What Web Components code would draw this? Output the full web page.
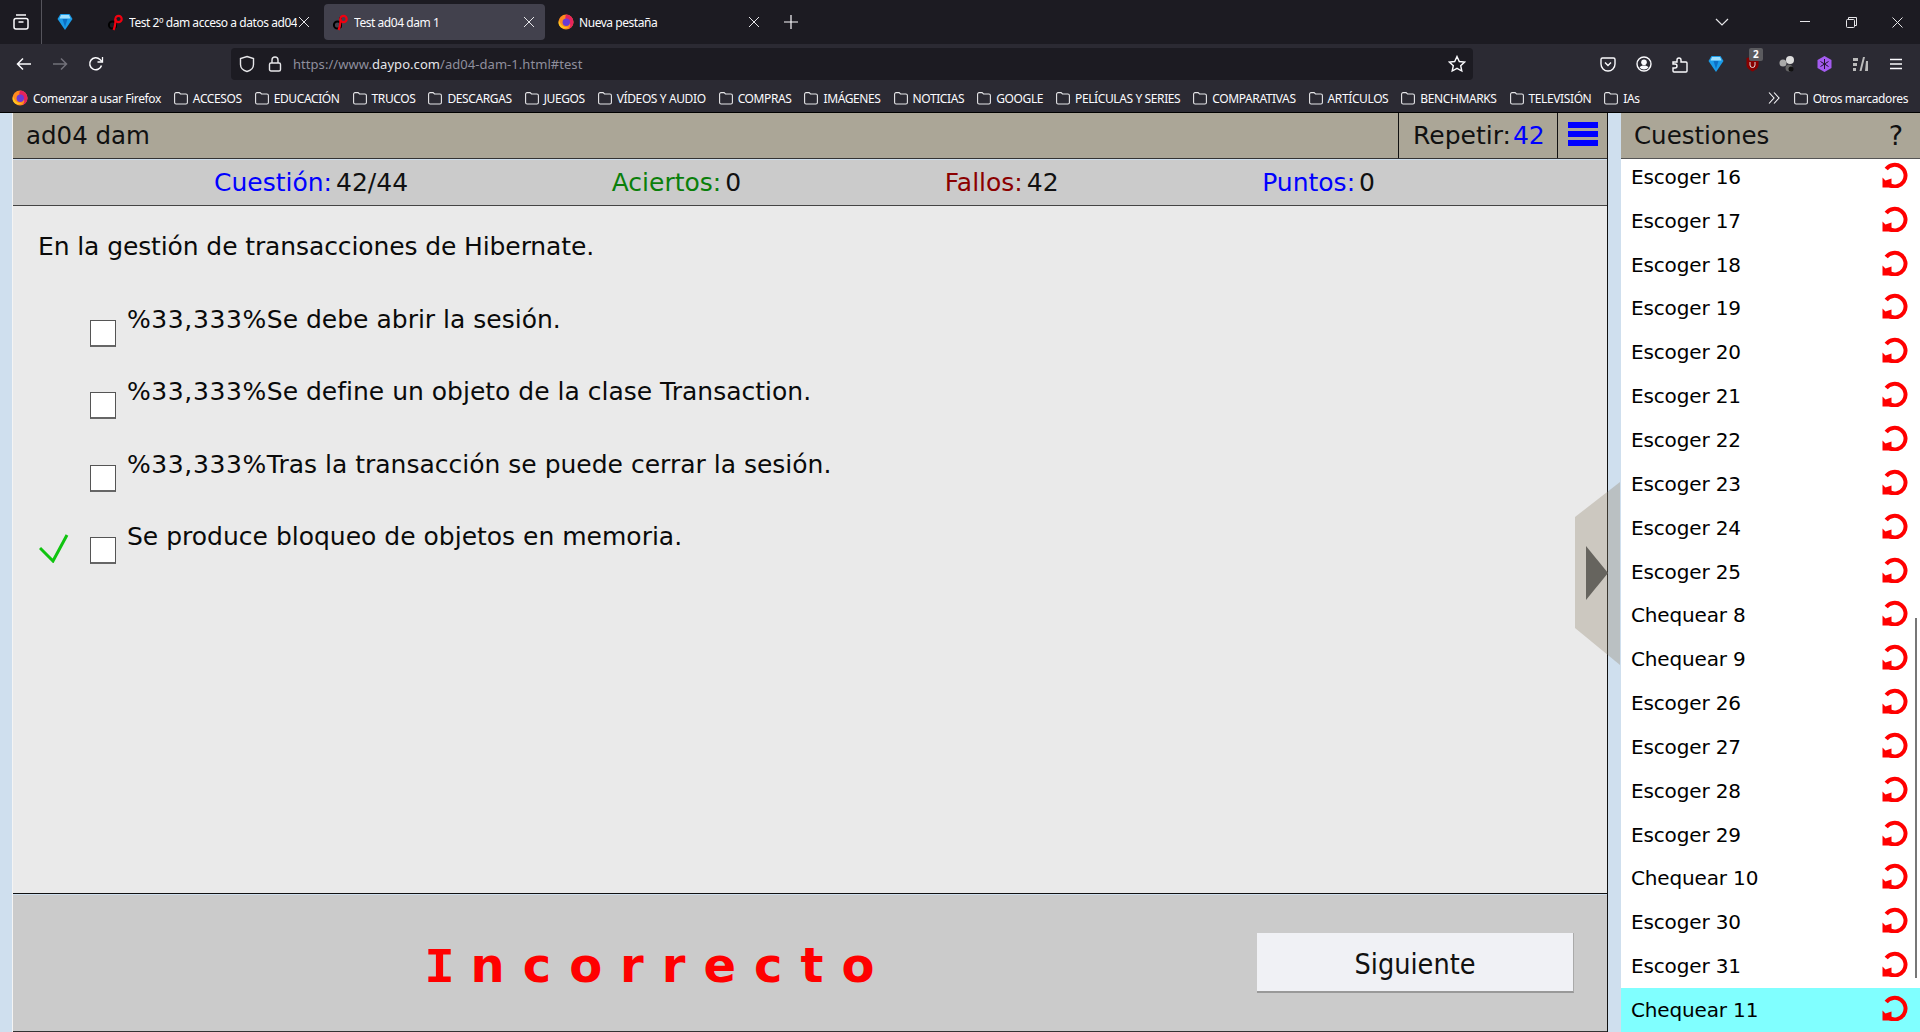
<!DOCTYPE html>
<html lang="es"><head><meta charset="utf-8"><title>Test ad04 dam 1</title>
<style>
html,body{margin:0;padding:0;height:1032px;overflow:hidden;background:#cfdfee}
body{display:flex;flex-direction:column;font-family:"DejaVu Sans",sans-serif}
</style></head><body>
<x-tabbar></x-tabbar>
<x-toolbar></x-toolbar>
<x-bookmarks></x-bookmarks>
<x-page>
  <x-title-bar slot="main" name="ad04 dam" repeat="42"></x-title-bar>
  <x-stats slot="main"></x-stats>
  <x-question slot="main" text="En la gestión de transacciones de Hibernate.">
    <x-option><span style="letter-spacing:.6px">%33,333%</span>Se debe abrir la sesión.</x-option>
    <x-option><span style="letter-spacing:.6px">%33,333%</span>Se define un objeto de la clase Transaction.</x-option>
    <x-option><span style="letter-spacing:.6px">%33,333%</span>Tras la transacción se puede cerrar la sesión.</x-option>
    <x-option checked>Se produce bloqueo de objetos en memoria.</x-option>
  </x-question>
  <x-status slot="main"></x-status>
  <x-sidebar slot="side"></x-sidebar>
</x-page>
<script>
const def=(n,html,setup)=>customElements.define(n,class extends HTMLElement{
  connectedCallback(){ if(this.shadowRoot) return; const s=this.attachShadow({mode:'open'}); s.innerHTML=typeof html==='function'?html(this):html; if(setup) setup(this,s); }
});
const UI='"Noto Sans",sans-serif';
const daypo=`<svg width="17" height="17" viewBox="0 0 17 17"><circle cx="5.500" cy="11" r="3.600" fill="none" stroke="#000" stroke-width="2"/><path d="M8.500 3v11" stroke="#000" stroke-width="2"/><circle cx="11.500" cy="5" r="3.200" fill="none" stroke="#f00110" stroke-width="2.200"/><path d="M8.500 5c0 5-.5 8-2 11" stroke="#f00110" stroke-width="2.200" fill="none"/></svg>`;
const diamond=`<svg width="16" height="18" viewBox="0 0 16 18"><path d="M3.500 1h9L15.500 6 8 17 .5 6z" fill="#1a9be8"/><path d="M4 2h8l1.500 3.500h-11z" fill="#9fe0ff"/><path d="M5.500 6h5L8 14z" fill="#0d6fc4"/></svg>`;
const fox=`<svg width="16" height="16" viewBox="0 0 16 16"><circle cx="8" cy="8" r="7.500" fill="#ff8a1f"/><path d="M8 .5a7.500 7.500 0 0 1 7.500 7.500c0 3-2 6-5 7 2-2 2.500-5 .5-7-1-1-3-1-3.500-3C7 3.500 7.500 2 8 .5z" fill="#e5235d"/><circle cx="8.300" cy="8.300" r="3.700" fill="#6a3bd6"/><path d="M1 6c1 4 4 8 9 7-3 3-9 1-9.500-4z" fill="#ffc41f"/></svg>`;
const X=s=>`<svg width="12" height="12" viewBox="0 0 12 12"><path d="M1 1l10 10M11 1L1 11" stroke="#e6e6e9" stroke-width="${s||1}" fill="none"/></svg>`;

def('x-tab',el=>`<style>
:host{display:flex;align-items:center;width:221px;height:36px;box-sizing:border-box;padding-left:8px;border-radius:4px;color:#fbfbfe;font:12px ${UI};letter-spacing:-.45px;flex:none}
:host([active]){background:#42414d}
.i{width:17px;height:17px;margin-right:5px;display:flex;align-items:center;justify-content:center;flex:none}
.t{flex:1;overflow:hidden;white-space:nowrap}
.c{width:32px;flex:none;display:flex;justify-content:center}
:host([tight]) .c{width:23px;justify-content:flex-start;padding-left:1px;box-sizing:border-box}
</style><div class="i">${el.getAttribute('ic')==='fox'?fox:daypo}</div><div class="t"><slot></slot></div><div class="c">${X()}</div>`);

def('x-tabbar',`<style>
:host{display:flex;align-items:center;height:44px;background:#1c1b22;flex:none;position:relative}
.m{width:41px;height:44px;border-right:1px solid #55545c;display:flex;align-items:center;justify-content:center;flex:none}
.p{width:46px;display:flex;justify-content:center;flex:none;margin-right:11px}
.tabs{display:flex;gap:4px;flex:none}
.plus{width:42px;display:flex;justify-content:center;flex:none}
.r{margin-left:auto;display:flex;align-items:center;height:44px}
.r span{display:flex;justify-content:center;align-items:center}
</style>
<div class="m"><svg width="18" height="18" viewBox="0 0 18 18" fill="none" stroke="#fbfbfe" stroke-width="1.500"><rect x="2" y="5.500" width="14" height="10.500" rx="2"/><path d="M4 2h10" /><path d="M6.500 9h5"/></svg></div>
<div class="p">${diamond}</div>
<div class="tabs">
<x-tab tight>Test 2º dam acceso a datos ad04</x-tab>
<x-tab active>Test ad04 dam 1</x-tab>
<x-tab ic="fox">Nueva pestaña</x-tab>
</div>
<div class="plus"><svg width="14" height="14" viewBox="0 0 14 14"><path d="M7 0v14M0 7h14" stroke="#fbfbfe" stroke-width="1.200"/></svg></div>
<div class="r">
<span style="width:14px;margin-right:53px"><svg width="14" height="8" viewBox="0 0 14 8"><path d="M1 1l6 6 6-6" stroke="#e6e6e9" stroke-width="1.200" fill="none"/></svg></span>
<span style="width:46px"><svg width="10" height="2"><rect width="10" height="1" fill="#e6e6e9"/></svg></span>
<span style="width:46px"><svg width="11" height="11" viewBox="0 0 11 11" fill="none" stroke="#e6e6e9"><rect x=".5" y="2.500" width="8" height="8" rx="1"/><path d="M2.500 2.500V.5h8v8H8.500"/></svg></span>
<span style="width:46px"><svg width="11" height="11" viewBox="0 0 11 11"><path d="M.5.5l10 10M10.500.5l-10 10" stroke="#e6e6e9" fill="none"/></svg></span>
</div>`);

def('x-toolbar',`<style>
:host{display:flex;align-items:center;height:36px;box-sizing:border-box;padding-top:4px;background:#2b2a33;flex:none;color:#fbfbfe}
.n{width:36px;display:flex;justify-content:center;flex:none}
.first{margin-left:6px}
.url{margin-left:117px;width:1242px;height:32px;background:#1c1b22;border-radius:4px;display:flex;align-items:center;flex:none;box-sizing:border-box;font:13px ${UI};color:#8f8f9d;white-space:nowrap;letter-spacing:.05px}
.url b{font-weight:400;color:#e6e6ea}
.s{width:16px;margin-left:8px;display:flex}
.l{width:16px;margin-left:12px;margin-right:10px;display:flex;justify-content:center}
.star{margin-left:auto;margin-right:7px;display:flex}
.ex{display:flex;margin-left:117px;align-items:center}
.ex>span{width:36px;display:flex;justify-content:center;align-items:center;position:relative;flex:none}
.bd{position:absolute;left:15px;top:-8px;background:#5b5b5f;color:#fff;font:bold 10px/13px ${UI};padding:0 4px;border-radius:2px}
</style>
<span class="n first"><svg width="16" height="14" viewBox="0 0 16 14" fill="none" stroke="#fbfbfe" stroke-width="1.500"><path d="M15 7H1.500M7 1.500L1.500 7 7 12.500"/></svg></span>
<span class="n"><svg width="16" height="14" viewBox="0 0 16 14" fill="none" stroke="#72717a" stroke-width="1.500"><path d="M1 7h13.500M9 1.500L14.500 7 9 12.500"/></svg></span>
<span class="n"><svg width="16" height="16" viewBox="0 0 16 16" fill="none" stroke="#fbfbfe" stroke-width="1.500"><path d="M13.500 9.500A6 6 0 1 1 12 3.500L14 5.500"/><path d="M14.500 1v5h-5" stroke-width="1.300"/></svg></span>
<div class="url">
<span class="s"><svg width="16" height="18" viewBox="0 0 16 18" fill="none" stroke="#e6e6e9" stroke-width="1.400"><path d="M8 1.500l6.500 2v6c0 3.500-3 6-6.500 7-3.500-1-6.500-3.500-6.500-7v-6z"/></svg></span>
<span class="l"><svg width="14" height="18" viewBox="0 0 14 18" fill="none" stroke="#e6e6e9" stroke-width="1.400"><rect x="1.500" y="8" width="11" height="8" rx="1.500"/><path d="M4 8V5a3 3 0 0 1 6 0v3"/></svg></span>
<span>https://www.<b>daypo.com</b>/ad04-dam-1.html#test</span>
<span class="star"><svg width="18" height="18" viewBox="0 0 18 18" fill="none" stroke="#fbfbfe" stroke-width="1.400"><path d="M9 1.500l2.300 5 5.300.6-3.900 3.600 1.100 5.300L9 13.300 4.200 16l1.100-5.300L1.400 7.100l5.300-.6z"/></svg></span>
</div>
<div class="ex">
<span><svg width="16" height="15" viewBox="0 0 16 15" fill="none" stroke="#fbfbfe" stroke-width="1.400"><path d="M2.500 1h11A1.500 1.500 0 0 1 15 2.500V7A7 7 0 0 1 1 7V2.500A1.500 1.500 0 0 1 2.500 1z"/><path d="M5 5.500l3 3 3-3"/></svg></span>
<span><svg width="16" height="16" viewBox="0 0 16 16"><circle cx="8" cy="8" r="7" fill="none" stroke="#fbfbfe" stroke-width="1.400"/><circle cx="8" cy="6.300" r="2.800" fill="#fbfbfe"/><path d="M3.500 11.500c1-1.500 2.500-2 4.500-2s3.500.5 4.500 2A6 6 0 0 1 8 13.500a6 6 0 0 1-4.500-2z" fill="#fbfbfe"/></svg></span>
<span><svg width="16" height="18" viewBox="0 0 16 18" fill="none" stroke="#fbfbfe" stroke-width="1.400"><path d="M1 7h4V5a2 2 0 0 1 4 0v2h5a1 1 0 0 1 1 1v8a1 1 0 0 1-1 1H2a1 1 0 0 1-1-1v-3h2a2 2 0 0 0 0-4H1z"/></svg></span>
<span>${diamond}</span>
<span><svg width="13" height="16" viewBox="0 0 13 16"><path d="M.5 2L6.500.5l6 1.500v7c0 3-3 5-6 6.500-3-1.500-6-3.500-6-6.500z" fill="#800"/><path d="M4 6v3a2 2 0 0 0 5 0V6" stroke="#ddd" fill="none"/></svg><i class="bd" style="font-style:normal">2</i></span>
<span><svg width="18" height="16" viewBox="0 0 18 16"><circle cx="4" cy="7" r="3.500" fill="#aaa"/><circle cx="11" cy="4" r="4" fill="#ddd"/><circle cx="10" cy="12" r="3.500" fill="#666"/><circle cx="12" cy="13" r="2.500" fill="#111"/></svg></span>
<span><svg width="15" height="16" viewBox="0 0 15 16"><path d="M7.500 0l7 4v8l-7 4-7-4V4z" fill="#a45bf0"/><path d="M7.500 3v10M3.500 5.500l8 5M11.500 5.500l-8 5" stroke="#20152e" stroke-width="1"/></svg></span>
<span><svg width="15" height="14" viewBox="0 0 15 14" fill="#bbb"><rect x="0" y="1" width="5" height="3"/><rect x="0" y="6" width="4" height="3"/><rect x="0" y="11" width="3" height="3"/><path d="M10 0h2l-3.500 14h-2zM13 4h2v10h-3z"/></svg></span>
<span><svg width="14" height="12" viewBox="0 0 14 12"><path d="M1 1.500h12M1 6h12M1 10.500h12" stroke="#fbfbfe" stroke-width="1.300"/></svg></span>
</div>`);

const folder=`<svg width="14" height="13" viewBox="0 0 14 13" fill="none" stroke="#e6e6e9" stroke-width="1.100"><path d="M.6 2.100A1.500 1.500 0 0 1 2.100.6h3l1.400 1.400h5.400a1.500 1.500 0 0 1 1.500 1.500v7a1.500 1.500 0 0 1-1.500 1.500H2.100a1.500 1.500 0 0 1-1.500-1.500z"/></svg>`;
def('x-bm',el=>`<style>
:host{display:flex;align-items:center;gap:5px;flex:none;color:#fbfbfe;font:12px ${UI};letter-spacing:-.39px;white-space:nowrap}
svg{flex:none}
</style>${el.hasAttribute('fox')?fox:folder}<slot></slot>`);
def('x-bookmarks',`<style>
:host{display:flex;align-items:center;height:33px;box-sizing:border-box;padding:4px 12px 0 12px;border-bottom:1px solid #000;background:#2b2a33;flex:none}
.l{display:flex;align-items:center;gap:13px}
.more{margin-left:auto;margin-right:14px;display:flex}
</style><div class="l">
<x-bm fox>Comenzar a usar Firefox</x-bm><x-bm>ACCESOS</x-bm><x-bm>EDUCACIÓN</x-bm><x-bm>TRUCOS</x-bm><x-bm>DESCARGAS</x-bm><x-bm>JUEGOS</x-bm><x-bm>VÍDEOS Y AUDIO</x-bm><x-bm>COMPRAS</x-bm><x-bm>IMÁGENES</x-bm><x-bm>NOTICIAS</x-bm><x-bm>GOOGLE</x-bm><x-bm>PELÍCULAS Y SERIES</x-bm><x-bm>COMPARATIVAS</x-bm><x-bm>ARTÍCULOS</x-bm><x-bm>BENCHMARKS</x-bm><x-bm>TELEVISIÓN</x-bm><x-bm>IAs</x-bm>
</div>
<span class="more"><svg width="12" height="12" viewBox="0 0 12 12" fill="none" stroke="#fbfbfe" stroke-width="1.100"><path d="M1 .5l5 5.500-5 5.500M6 .5l5 5.500-5 5.500"/></svg></span>
<x-bm>Otros marcadores</x-bm>`);

def('x-page',`<style>
:host{display:flex;flex:1;min-height:0;background:#cfdfee;position:relative;overflow:hidden}
.main{margin-left:12px;width:1596px;box-sizing:border-box;border-left:1px solid #f4f4f4;border-right:1px solid #111;display:flex;flex-direction:column;flex:none}
.side{margin-left:13px;flex:1;min-width:0;display:flex}
.ov{position:absolute;left:1575px;top:369px;pointer-events:none}
</style>
<div class="main"><slot name="main"></slot></div>
<div class="side"><slot name="side"></slot></div>
<svg class="ov" width="45" height="183" viewBox="0 0 45 183"><path d="M0 35L45 0V183L0 146z" fill="rgb(142,131,107)" fill-opacity=".33"/><path d="M11 64l22 27-22 27z" fill="#66645e"/></svg>`);

def('x-title-bar',el=>`<style>
:host{display:flex;align-items:stretch;height:46px;box-sizing:border-box;border-bottom:1px solid #333;background:#aba697;color:#111;font:24.500px/46px "DejaVu Sans",sans-serif;flex:none}
.n{flex:1;padding-left:13px}
.r{border-left:1px solid #111;padding-left:14px;display:flex;width:159px;box-sizing:border-box;white-space:nowrap;font-size:25px;flex:none}
.r b{font-weight:400;color:#00f;margin-left:2px}
.m{border-left:1px solid #111;width:50px;box-sizing:border-box;padding:9px 10px 0;flex:none}
.m i{display:block;height:6px;background:#00f;margin-bottom:3px;width:30px}
</style><div class="n">${el.getAttribute('name')}</div><div class="r">Repetir:<b>${el.getAttribute('repeat')}</b></div><div class="m"><i></i><i></i><i></i></div>`);

def('x-stat',el=>`<style>
:host{display:flex;white-space:nowrap}
b{font-weight:400;color:${el.getAttribute('c')};margin-right:4px}
</style><b>${el.getAttribute('k')}</b><slot></slot>`);
def('x-stats',`<style>
:host{display:flex;justify-content:space-between;height:46px;margin-top:1px;box-sizing:border-box;padding:0 232px 0 201px;background:#cbcbcb;border-bottom:1px solid #444;color:#111;font:25px/46px "DejaVu Sans",sans-serif;flex:none}
</style><x-stat k="Cuestión:" c="#0000ff">42/44</x-stat><x-stat k="Aciertos:" c="#0a7f0a">0</x-stat><x-stat k="Fallos:" c="#8b0000">42</x-stat><x-stat k="Puntos:" c="#0000ff">0</x-stat>`);

def('x-question',el=>`<style>
:host{display:block;flex:1;min-height:0;background:#eaeaea;color:#0a0a0a;font:25px/30px "DejaVu Sans",sans-serif;padding:26px 0 0 25px;box-sizing:border-box;border-bottom:1px solid #111}
.q{letter-spacing:-.11px}
.o{margin-top:42.500px;margin-left:1px;display:flex;flex-direction:column}
</style><div class="q">${el.getAttribute('text')}</div><div class="o"><slot></slot></div>`);

def('x-option',el=>`<style>
:host{display:flex;height:72.600px;flex:none;position:relative;padding-left:88px;box-sizing:border-box;white-space:nowrap}
.b{position:absolute;left:51px;top:15px;width:26px;height:27px;box-sizing:border-box;background:#fff;border:1px solid #555;border-bottom:2px solid #666}
svg{position:absolute;left:0;top:11px}
</style>${el.hasAttribute('checked')?'<svg width="30" height="30" viewBox="0 0 30 30"><path d="M1 15l13 13L28 2" fill="none" stroke="#10c410" stroke-width="3"/></svg>':''}<div class="b"></div><div><slot></slot></div>`);

def('x-status',`<style>
:host{display:flex;height:137px;margin-top:1px;box-sizing:border-box;background:#cbcbcb;border-bottom:1px solid #333;flex:none;position:relative}
.t{margin-left:411.500px;margin-top:42px;font:bold 48px/56px "DejaVu Sans",sans-serif;color:#f00;letter-spacing:18px;white-space:nowrap}
.t i{font-style:normal;font-family:"Liberation Mono",monospace;font-size:50px;letter-spacing:16px}
button{position:absolute;left:1244px;top:38px;width:317px;height:60px;box-sizing:border-box;background:#f0f1f5;border:0;border-right:1px solid #aaa;border-bottom:2px solid #999;font:28.500px "DejaVu Sans Condensed","DejaVu Sans",sans-serif;color:#111;padding:4px 0 0}
</style><div class="t"><i>I</i>ncorrecto</div><button>Siguiente</button>`);

function redo(){return `<svg width="26" height="26" viewBox="0 0 26 26"><path d="M4.200 7A10.800 10.800 0 1 1 7 22.800" fill="none" stroke="#f00" stroke-width="4"/><path d="M0.500 15.500L3.500 18.500 9.500 16.500 9.500 25.500H0.500z" fill="#f00"/></svg>`}
def('x-row',el=>`<style>
:host{display:flex;align-items:center;justify-content:space-between;height:43.850px;box-sizing:border-box;padding:0 12px 0 10px;font:20px "DejaVu Sans",sans-serif;color:#000;flex:none;letter-spacing:-.15px}
:host([sel]){background:#80ffff}
svg{display:block;margin-top:-4px;flex:none}
</style><span><slot></slot></span>${redo()}`);
def('x-sidebar',`<style>
:host{display:flex;flex-direction:column;flex:1;min-width:0;background:#fff;position:relative;overflow:hidden}
.h{height:46px;box-sizing:border-box;flex:none;background:#aba697;color:#111;border-bottom:1px solid #555;font:24.500px/46px "DejaVu Sans",sans-serif;display:flex;justify-content:space-between;padding:0 17px 0 13px}
.h span+span{font-size:27px}
.l{flex:1;min-height:0;overflow:hidden;display:flex;flex-direction:column}
.l>div{margin-top:-4px;display:flex;flex-direction:column}
.sb{position:absolute;right:3px;top:505px;width:2px;height:360px;background:#777}
</style><div class="h"><span>Cuestiones</span><span>?</span></div><div class="l"><div id="r"></div></div><div class="sb"></div>`,
(el,s)=>{
 const names=['Escoger 16','Escoger 17','Escoger 18','Escoger 19','Escoger 20','Escoger 21','Escoger 22','Escoger 23','Escoger 24','Escoger 25','Chequear 8','Chequear 9','Escoger 26','Escoger 27','Escoger 28','Escoger 29','Chequear 10','Escoger 30','Escoger 31','Chequear 11'];
 const r=s.getElementById('r');
 names.forEach((n,i)=>{const e=document.createElement('x-row');e.textContent=n;if(i===19)e.setAttribute('sel','');r.appendChild(e)});
});
</script>
</body></html>
